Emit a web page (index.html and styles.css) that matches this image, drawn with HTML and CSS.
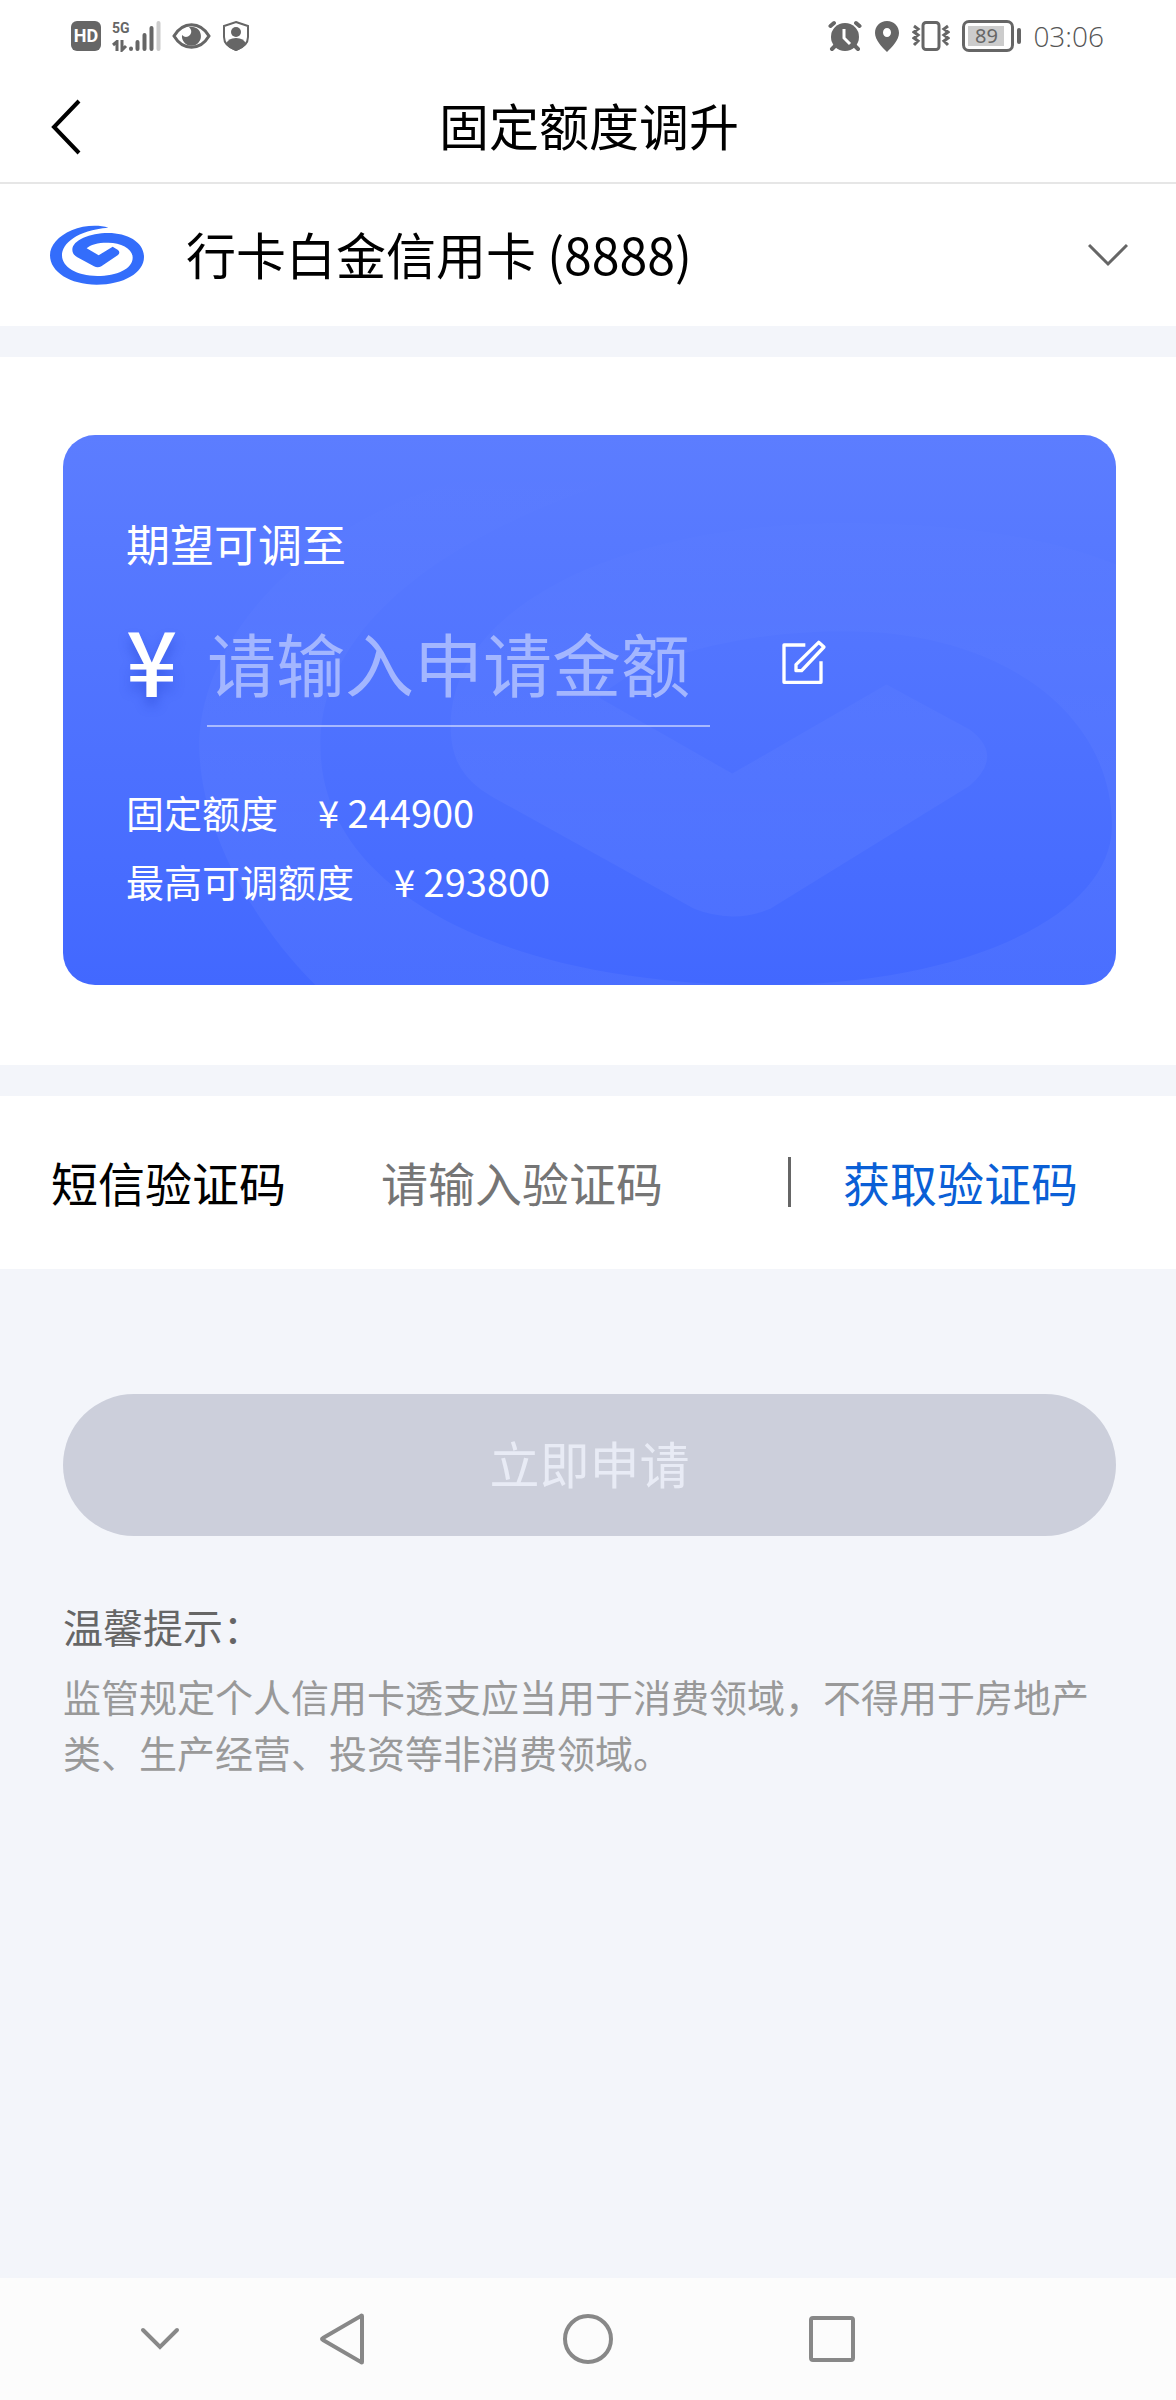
FILE: index.html
```html
<!DOCTYPE html>
<html lang="zh-CN">
<head>
<meta charset="utf-8">
<meta name="viewport" content="width=device-width, initial-scale=1">
<title>固定额度调升</title>
<link rel="stylesheet" href="styles.css">
</head>
<body>
<div class="status">
  <div class="status-group status-left">
    <span class="hd">HD</span>
    <span class="signal">
      <span class="net">
        <span class="net-name">5G</span>
        <svg width="16" height="12" viewBox="0 0 16 12" fill="none" stroke="#666" stroke-width="3"><path d="M1 5L5 1.500V11M10 0V10L14 6"/></svg>
      </span>
      <svg width="33" height="32" viewBox="0 0 33 32" stroke-width="4" stroke-linecap="round"><path stroke="#666" d="M3 28.500V29M9.500 22V29M16.500 15V29M23.500 8V29"/><path stroke="#ccc" d="M30.500 3V29"/></svg>
    </span>
    <svg width="39" height="28" viewBox="0 0 39 28"><path d="M2 14C11-1 28-1 37 14C28 29 11 29 2 14Z" fill="none" stroke="#666" stroke-width="3"/><path d="M17 5A9.500 9.500 0 1 1 10 13Q14 17 18 13Q21 9 17 5Z" fill="#666"/></svg>
    <svg width="28" height="32" viewBox="0 0 28 32"><path d="M14 2L26 6V17Q26 26 14 30Q2 26 2 17V6Z" fill="none" stroke="#666" stroke-width="2"/><circle cx="14" cy="12" r="5" fill="#666"/><path d="M4 24Q6 18 14 18T24 24Q20 29 14 31Q8 29 4 24Z" fill="#666"/></svg>
  </div>
  <div class="status-group">
    <svg width="34" height="32" viewBox="0 0 34 32"><g stroke="#666" stroke-width="4" stroke-linecap="round"><path d="M2.500 6L6 3M31.500 6L28 3M7 26L4 29M27 26L30 29"/></g><circle cx="17" cy="17" r="14" fill="#666"/><path d="M16 9V18L22 24" fill="none" stroke="#fff" stroke-width="3"/></svg>
    <svg width="26" height="32" viewBox="0 0 26 32"><path fill="#666" fill-rule="evenodd" d="M13 1C6 1 1 6 1 13C1 20 8 27 13 32C18 27 25 20 25 13C25 6 20 1 13 1ZM13 8A4 4.500 0 0 1 13 17A4 4.500 0 0 1 13 8Z"/></svg>
    <svg width="38" height="32" viewBox="0 0 38 32" fill="none" stroke="#666" stroke-width="3"><rect x="11" y="2.500" width="16" height="27" rx="3"/><path d="M2 6L6 9L2 12L6 15L2 18L6 21L2 25M36 6L32 9L36 12L32 15L36 18L32 21L36 25"/></svg>
    <span class="battery"><span class="battery-body"><span class="battery-fill">89</span></span><span class="battery-tip"></span></span>
    <time class="clock">03:06</time>
  </div>
</div>

<header class="header">
  <button class="back" type="button" aria-label="返回">
    <svg width="32" height="56" viewBox="0 0 32 56" fill="none" stroke="#000" stroke-width="4"><path d="M29 2L4 28L29 54"/></svg>
  </button>
  <h1 class="title">固定额度调升</h1>
</header>

<main class="main">
  <section class="panel account">
    <svg width="94" height="60" viewBox="30 34 282 180" fill="#336dfb" aria-hidden="true"><path d="M205 42C175 33 130 35 95 50C55 67 30 95 30 125C30 175 90 213 170 213C250 213 312 178 312 130C312 85 262 58 205 58C150 58 97 80 97 108C97 118 102 124 112 131L162 158Q173 164 184 158L234 124Q242 117 234 109L218 99L176 125L140 104C150 92 180 86 205 87C245 88 278 105 278 132C278 165 230 187 172 187C110 187 66 160 66 125C66 90 110 50 205 42Z"/></svg>
    <div class="picker">
      <select class="picker-select" aria-label="信用卡"><option>行卡白金信用卡 (8888)</option></select>
      <svg class="picker-arrow" width="40" height="24" viewBox="0 0 40 24" fill="none" stroke="#666" stroke-width="3"><path d="M1 2L20 21L39 2"/></svg>
    </div>
  </section>

  <section class="panel quota">
    <div class="card">
      <svg class="watermark" viewBox="0 0 1052 549" preserveAspectRatio="xMinYMin slice" aria-hidden="true">
        <defs>
          <linearGradient id="fade" x1="0" y1="0" x2="0" y2="1">
            <stop offset="0" stop-color="#fff" stop-opacity="0"/>
            <stop offset="0.55" stop-color="#fff" stop-opacity="0.04"/>
            <stop offset="1" stop-color="#fff" stop-opacity="0.05"/>
          </linearGradient>
        </defs>
        <path fill="url(#fade)" d="M640 20C300 0 136 180 136 310C136 450 300 700 640 700C1000 700 1200 520 1200 340C1200 150 1020 88 780 88C560 88 387 170 387 290C387 325 400 345 430 362L630 473Q668 488 706 473L905 350Q940 320 905 294L822 249L668 338L535 262C580 220 680 196 780 196C940 196 1047 280 1047 390C1047 480 900 549 700 549C450 549 257 460 257 310C257 180 400 80 640 20Z"/>
      </svg>
      <label class="card-label" for="amount">期望可调至</label>
      <div class="amount">
        <span class="yen">¥</span>
        <input class="amount-input" id="amount" type="text" placeholder="请输入申请金额">
        <button class="edit" type="button" aria-label="编辑">
          <svg width="48" height="48" viewBox="60 52 144 144" fill="none" stroke="#fff" stroke-width="10" stroke-linejoin="round"><path d="M136 73H72V185H183V122M108 150V132L176 65L192 79L125 150Z"/></svg>
        </button>
      </div>
      <dl class="limits">
        <div class="limit"><dt>固定额度</dt><dd>¥ 244900</dd></div>
        <div class="limit"><dt>最高可调额度</dt><dd>¥ 293800</dd></div>
      </dl>
    </div>
  </section>

  <section class="panel sms">
    <label class="sms-label" for="code">短信验证码</label>
    <input class="sms-input" id="code" type="text" placeholder="请输入验证码">
    <button class="sms-send" type="button">获取验证码</button>
  </section>

  <section class="action">
    <button class="submit" type="button" disabled>立即申请</button>
    <h2 class="tips-title">温馨提示：</h2>
    <p class="tips-text">监管规定个人信用卡透支应当用于消费领域，不得用于房地产类、生产经营、投资等非消费领域。</p>
  </section>
</main>

<nav class="nav">
  <button type="button" aria-label="收起"><svg width="40" height="24" viewBox="0 0 40 24"><path d="M3 3L20 20L37 3"/></svg></button>
  <button type="button" aria-label="后退"><svg width="48" height="52" viewBox="0 0 48 52"><path d="M43 3V49Q43 50 42 49L4 27Q2 26 4 25L42 3Q43 2 43 3Z"/></svg></button>
  <button type="button" aria-label="主屏幕"><svg width="52" height="52" viewBox="0 0 52 52"><circle cx="26" cy="26" r="23"/></svg></button>
  <button type="button" aria-label="最近任务"><svg width="48" height="48" viewBox="0 0 48 48"><rect x="3" y="3" width="42" height="42" rx="2"/></svg></button>
</nav>
</body>
</html>
```
FILE: styles.css
```css
* {
  box-sizing: border-box;
}

body {
  margin: 0;
  min-height: 100vh;
  display: flex;
  flex-direction: column;
  background: #f3f5fa;
  color: #000;
  font-family: "Noto Sans CJK SC", sans-serif;
}

button,
input,
select {
  margin: 0;
  padding: 0;
  border: 0;
  background: none;
  color: inherit;
  font: inherit;
}

svg {
  display: block;
  flex: none;
}

/* Status bar */
.status {
  display: flex;
  justify-content: space-between;
  align-items: center;
  height: 72px;
  padding: 0 72px 0 71px;
  background: #fff;
  color: #666;
}

.status-group {
  display: flex;
  align-items: center;
  gap: 12px;
}

.status-left {
  gap: 11px;
}

.hd {
  width: 30px;
  height: 30px;
  border-radius: 6px;
  background: #666;
  color: #fff;
  font: bold 18px/30px Roboto, sans-serif;
  text-align: center;
}

.signal {
  display: flex;
  align-items: center;
}

.net {
  display: flex;
  flex-direction: column;
  gap: 4px;
  width: 16px;
}

.net-name {
  font: bold 14px/16px Roboto, sans-serif;
}

.battery {
  display: flex;
  align-items: center;
  gap: 3px;
}

.battery-body {
  width: 52px;
  height: 32px;
  padding: 3px;
  border: 3px solid #666;
  border-radius: 7px;
}

.battery-fill {
  display: block;
  width: 36px;
  height: 20px;
  background: #ccc;
  font: 20px/20px "Noto Sans", sans-serif;
  text-align: center;
}

.battery-tip {
  width: 4px;
  height: 16px;
  border-radius: 2px;
  background: #666;
}

.clock {
  font: 28px/32px "Open Sans", sans-serif;
  font-weight: 300;
  color: #555;
}

/* Page header */
.header {
  display: grid;
  grid-template-columns: 1fr auto 1fr;
  align-items: center;
  height: 112px;
  padding: 0 48px 0 50px;
  border-bottom: 2px solid #e6e6e6;
  background: #fff;
}

.back {
  justify-self: start;
}

.title {
  margin: 0;
  padding-bottom: 6px;
  font-family: KaiTi, STKaiti, "Noto Sans CJK SC", sans-serif;
  font-size: 50px;
  font-weight: 400;
  line-height: 64px;
}

/* Content panels */
.main {
  display: flex;
  flex-direction: column;
  gap: 31px;
  flex: 1;
}

.panel {
  background: #fff;
}

.account {
  display: flex;
  align-items: center;
  gap: 42px;
  height: 142px;
  padding: 0 48px 0 50px;
}

.picker {
  flex: 1;
  display: grid;
  align-items: center;
}

.picker-select {
  grid-area: 1 / 1;
  appearance: none;
  padding-bottom: 4px;
  font-size: 50px;
  line-height: 72px;
}

.picker-arrow {
  grid-area: 1 / 1;
  justify-self: end;
  pointer-events: none;
}

.quota {
  padding: 78px 60px 80px 63px;
}

.card {
  position: relative;
  overflow: hidden;
  padding: 76px 63px 70px;
  border-radius: 32px;
  background: linear-gradient(#5c7dff, #4268ff);
  color: #fff;
}

.watermark {
  position: absolute;
  inset: 0;
  width: 100%;
  height: 100%;
}

.card-label {
  display: block;
  font-size: 44px;
  line-height: 64px;
}

.amount {
  position: relative;
  display: flex;
  align-items: center;
  margin-top: 26px;
}

.yen {
  width: 81px;
  padding-bottom: 12px;
  font-size: 90px;
  font-weight: 500;
  line-height: 100px;
  text-shadow: 0 8px 12px rgba(30, 60, 200, 0.4);
}

.amount-input {
  width: 503px;
  height: 126px;
  padding-bottom: 2px;
  border-bottom: 2px solid rgba(255, 255, 255, 0.5);
  font-size: 69px;
}

.amount-input::placeholder {
  color: #a3b6ff;
  opacity: 1;
}

.edit {
  margin-left: 70px;
  padding-bottom: 4px;
}

.limits {
  position: relative;
  margin: 50px 0 0;
  font-size: 38px;
  line-height: 69px;
}

.limit {
  display: flex;
  gap: 40px;
}

.limit dd {
  margin: 0;
}

.sms {
  display: flex;
  align-items: center;
  height: 173px;
  padding: 0 98px 2px 51px;
  font-size: 47px;
}

.sms-label {
  margin-right: 95px;
}

.sms-input {
  flex: 1;
  min-width: 0;
  height: 72px;
}

.sms-input::placeholder {
  color: #757575;
  opacity: 1;
}

.sms-send {
  padding-left: 52px;
  border-left: 3px solid #666;
  color: #0a5fd6;
  line-height: 50px;
}

.action {
  padding: 94px 60px 94px 63px;
}

.submit {
  display: block;
  width: 100%;
  height: 142px;
  padding-bottom: 6px;
  border-radius: 71px;
  background: #cccfdb;
  color: #e8ebf5;
  font-size: 50px;
}

.tips-title {
  margin: 60px 0 0;
  color: #666;
  font-size: 40px;
  font-weight: 400;
  line-height: 60px;
}

.tips-text {
  margin: 12px 0 0;
  color: #999;
  font-size: 38px;
  line-height: 56px;
}

/* System navigation */
.nav {
  display: grid;
  grid-template-columns: 1fr 2fr 2fr 2fr;
  place-items: center;
  height: 122px;
  padding: 0 222px 0 99px;
  background: #fcfcfc;
}

.nav svg {
  fill: none;
  stroke: #888;
  stroke-width: 4;
  stroke-linecap: round;
}
```
